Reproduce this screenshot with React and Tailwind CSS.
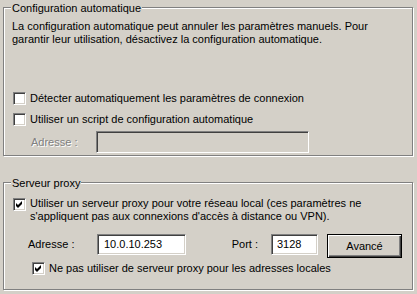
import React from "react";

const sunken = "border border-t-[#808080] border-l-[#808080] border-r-white border-b-white shadow-[inset_1px_1px_0_#404040,inset_-1px_-1px_0_#d4d0c8]";

const CheckBox = ({ checked }) => (
    <div className={`w-[13px] h-[13px] shrink-0 bg-white flex items-center justify-center ${sunken}`}>
        {checked && (
            <svg width="7" height="7" viewBox="0 0 7 7">
                <path d="M0 2 L2 4 L6 0 L6 3 L2 7 L0 5 Z" fill="#000" />
            </svg>
        )}
    </div>
);

const GroupBox = ({ title, className, children }) => (
    <div className={`relative border border-[#808080] shadow-[1px_1px_0_#fff,inset_1px_1px_0_#fff] ${className}`}>
        <span className="absolute left-[7px] -top-[6px] px-[1px] bg-[#d4d0c8] leading-[13px]">{title}</span>
        {children}
    </div>
);

const App = () => {
    return (
        <div className="w-[417px] h-[294px] bg-[#d4d0c8] pt-[7px] pl-[3px] text-[11px] leading-[13px] text-black font-['Liberation_Sans',Arial,sans-serif] overflow-hidden">
            <GroupBox title="Configuration automatique" className="w-[410px] h-[149px] pt-[12px] pl-[8px]">
                <p>
                    La configuration automatique peut annuler les paramètres manuels. Pour
                    <br />
                    garantir leur utilisation, désactivez la configuration automatique.
                </p>
                <div className="mt-[46px] pl-[1px] flex items-center gap-[4px]">
                    <CheckBox />
                    <span>Détecter automatiquement les paramètres de connexion</span>
                </div>
                <div className="mt-[8px] pl-[1px] flex items-center gap-[4px]">
                    <CheckBox />
                    <span>Utiliser un script de configuration automatique</span>
                </div>
                <div className="mt-[5px] flex items-center">
                    <span className="w-[84px] pl-[19px] text-[#808080] [text-shadow:1px_1px_0_#fff]">Adresse :</span>
                    <div className={`w-[213px] h-[22px] bg-[#d4d0c8] ${sunken}`} />
                </div>
            </GroupBox>

            <GroupBox title="Serveur proxy" className="mt-[26px] w-[410px] h-[108px] pt-[14px]">
                <div className="pl-[9px] flex items-start gap-[4px]">
                    <div className="mt-[1px]">
                        <CheckBox checked />
                    </div>
                    <span>
                        Utiliser un serveur proxy pour votre réseau local (ces paramètres ne
                        <br />
                        s'appliquent pas aux connexions d'accès à distance ou VPN).
                    </span>
                </div>
                <div className="mt-[11px] flex items-start">
                    <span className="w-[93px] pl-[24px] h-[21px] flex items-center">Adresse :</span>
                    <div className={`w-[89px] h-[21px] bg-white pl-[6px] flex items-center ${sunken}`}>10.0.10.253</div>
                    <span className="w-[85px] h-[21px] pr-[13px] flex items-center justify-end">Port :</span>
                    <div className={`w-[47px] h-[21px] bg-white pl-[5px] flex items-center ${sunken}`}>3128</div>
                    <button className="ml-[9px] w-[75px] h-[24px] border border-black bg-[#d4d0c8] shadow-[inset_1px_1px_0_#fff,inset_-1px_-1px_0_#404040,inset_-2px_-2px_0_#808080] flex items-center justify-center">
                        Avancé
                    </button>
                </div>
                <div className="mt-[4px] pl-[28px] flex items-center gap-[4px]">
                    <CheckBox checked />
                    <span>Ne pas utiliser de serveur proxy pour les adresses locales</span>
                </div>
            </GroupBox>
        </div>
    );
};

export default App;
